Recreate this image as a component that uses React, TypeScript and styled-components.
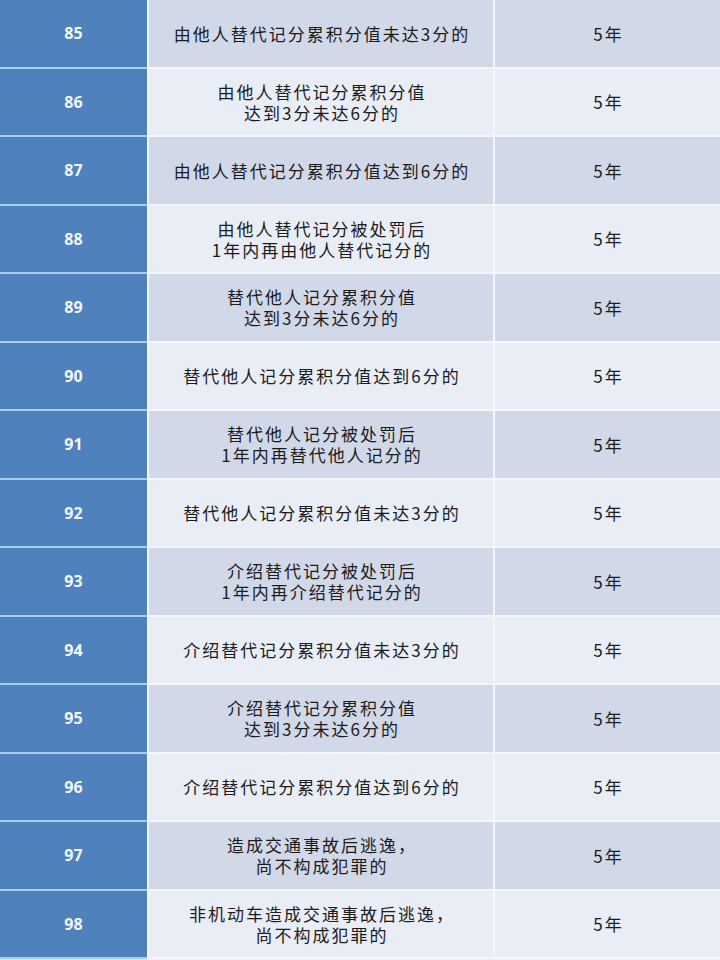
import React from 'react';
import styled, { createGlobalStyle } from 'styled-components';

const GlobalStyle = createGlobalStyle`
  html, body {
    margin: 0;
    padding: 0;
    background: #ffffff;
  }
  body {
    width: 720px;
    height: 960px;
    overflow: hidden;
  }
`;

interface Rule {
  no: number;
  lines: string[];
  years: string;
}

const rules: Rule[] = [
  { no: 85, lines: ['由他人替代记分累积分值未达3分的'], years: '5年' },
  { no: 86, lines: ['由他人替代记分累积分值', '达到3分未达6分的'], years: '5年' },
  { no: 87, lines: ['由他人替代记分累积分值达到6分的'], years: '5年' },
  { no: 88, lines: ['由他人替代记分被处罚后', '1年内再由他人替代记分的'], years: '5年' },
  { no: 89, lines: ['替代他人记分累积分值', '达到3分未达6分的'], years: '5年' },
  { no: 90, lines: ['替代他人记分累积分值达到6分的'], years: '5年' },
  { no: 91, lines: ['替代他人记分被处罚后', '1年内再替代他人记分的'], years: '5年' },
  { no: 92, lines: ['替代他人记分累积分值未达3分的'], years: '5年' },
  { no: 93, lines: ['介绍替代记分被处罚后', '1年内再介绍替代记分的'], years: '5年' },
  { no: 94, lines: ['介绍替代记分累积分值未达3分的'], years: '5年' },
  { no: 95, lines: ['介绍替代记分累积分值', '达到3分未达6分的'], years: '5年' },
  { no: 96, lines: ['介绍替代记分累积分值达到6分的'], years: '5年' },
  { no: 97, lines: ['造成交通事故后逃逸，', '尚不构成犯罪的'], years: '5年' },
  { no: 98, lines: ['非机动车造成交通事故后逃逸，', '尚不构成犯罪的'], years: '5年' },
];

export default function App() {
  return (
    <>
      <GlobalStyle />
      <Table>
        {rules.map((r, i) => (
          <Row key={r.no}>
            <NoCell>{r.no}</NoCell>
            <TextCell dark={i % 2 === 0}>
              {r.lines.map(l => (
                <Line key={l}>{l}</Line>
              ))}
            </TextCell>
            <TextCell dark={i % 2 === 0}>
              <Line>{r.years}</Line>
            </TextCell>
          </Row>
        ))}
      </Table>
    </>
  );
}

const Table = styled.div`
  width: 720px;
  height: 960px;
  display: flex;
  flex-direction: column;
  background: #e9eef6;
`;

const Row = styled.div`
  height: 68.5px;
  flex: none;
  display: grid;
  grid-template-columns: 147px 346px 1fr;
`;

const NoCell = styled.div`
  background: #4f81bd;
  border-bottom: 2px solid #a9cdf2;
  display: flex;
  align-items: center;
  justify-content: center;
  font-family: 'Open Sans', 'Liberation Sans', sans-serif;
  font-weight: 700;
  font-size: 16px;
  color: #f2f8ff;
`;

const TextCell = styled.div<{ dark?: boolean }>`
  background: ${props => (props.dark ? '#d1d8e8' : '#e9edf5')};
  border-left: 2px solid #f4f6fb;
  border-bottom: 2px solid #f4f6fb;
  display: flex;
  flex-direction: column;
  align-items: center;
  justify-content: center;
  font-family: 'Noto Sans CJK SC', 'Noto Sans', sans-serif;
  font-size: 17px;
  letter-spacing: 2px;
  color: #1c1c1c;
`;

const Line = styled.div`
  line-height: 21px;
  padding-left: 2px;
`;
